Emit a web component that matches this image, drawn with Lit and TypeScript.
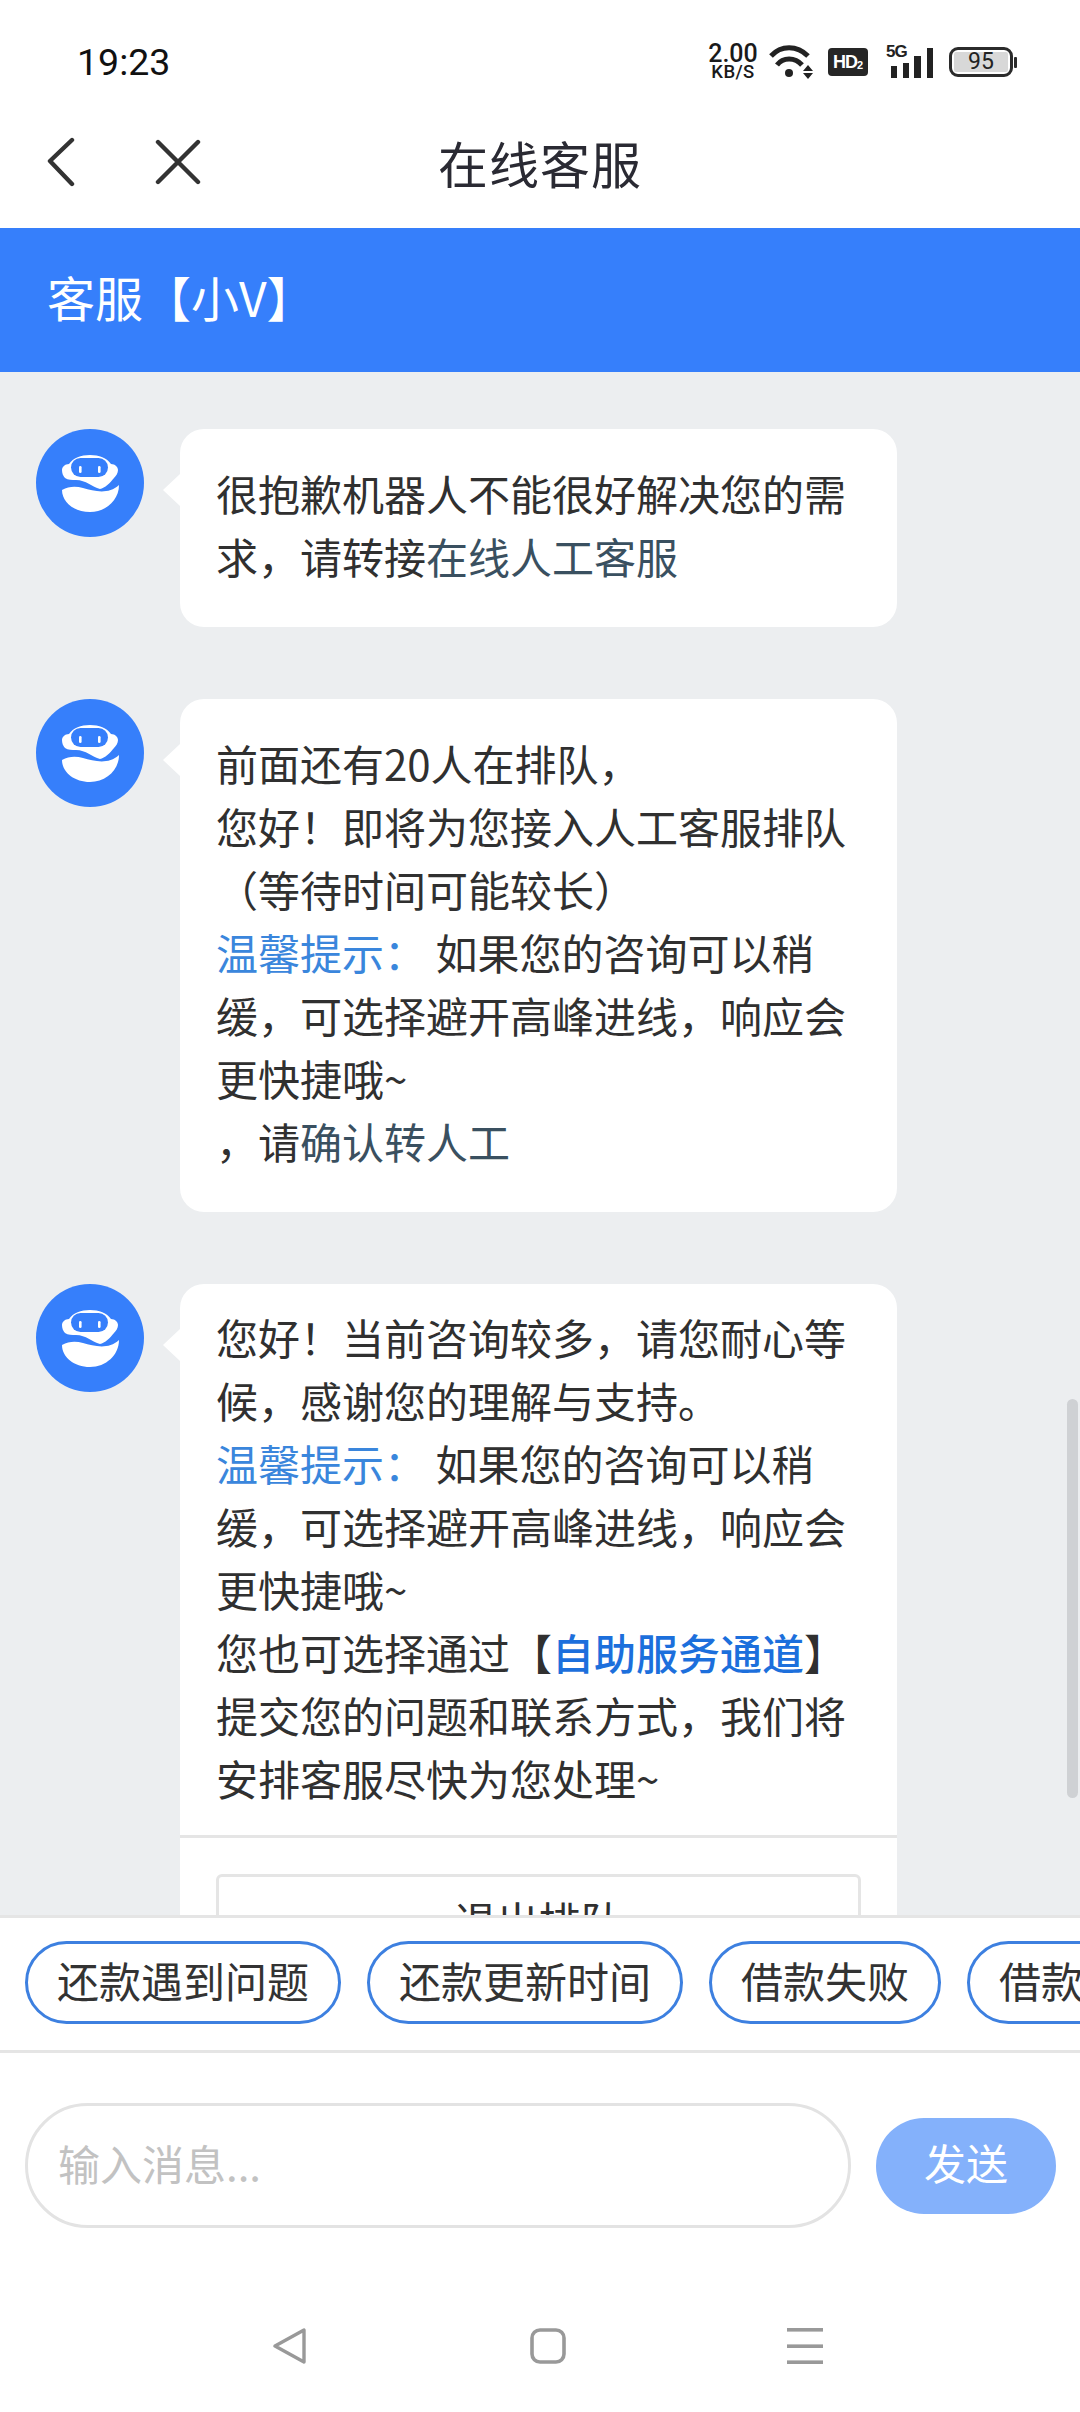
import { LitElement, html, css, unsafeCSS } from "lit";
import { customElement } from "lit/decorators.js";

const CJK = unsafeCSS(`"Noto Sans CJK SC", "Noto Sans", sans-serif`);

@customElement("app-root")
export class AppRoot extends LitElement {
  static styles = css`
    :host { display: block; width: 1080px; height: 2412px; font-family: ${CJK}; background: #fff; overflow: hidden; color: #303030; }
    .page { display: flex; flex-direction: column; height: 2412px; }
    .status { height: 68px; padding: 28px 67px 0 77px; display: flex; align-items: center; justify-content: space-between; flex: none; }
    .time { font: 400 37.5px Roboto, sans-serif; color: #111; }
    .sicons { display: flex; align-items: center; }
    .speed { width: 50px; margin-right: 11px; display: flex; flex-direction: column; align-items: center; font-family: Roboto, sans-serif; font-weight: 500; color: #1a1a1a; line-height: 1; }
    .speed b { font-size: 25px; font-weight: 500; line-height: 20px; }
    .speed i { font-style: normal; font-size: 18.5px; line-height: 16px; letter-spacing: 0.4px; }
    .hd { width: 40px; height: 28px; margin: 0 19px 0 15px; background: #262626; border-radius: 4px; color: #fff; font: 700 18px "Liberation Sans", sans-serif; display: flex; align-items: center; justify-content: center; letter-spacing: -1px; }
    .hd sub { font-size: 11px; line-height: 1; vertical-align: baseline; margin-top: 6px; letter-spacing: 0; }
    .net { position: relative; width: 46px; height: 32px; margin-right: 16px; }
    .net span { position: absolute; left: -1px; top: -4px; font: 700 17px/20px "Liberation Sans", sans-serif; color: #222; letter-spacing: -1px; }
    .batt { width: 64px; height: 30px; box-sizing: border-box; border: 3px solid #2b2b2b; border-radius: 9px; padding: 2px; position: relative; display: flex; }
    .batt::after { content: ""; position: absolute; right: -7px; top: 7px; width: 3px; height: 11px; background: #2b2b2b; border-radius: 1px; }
    .batt span { flex: 1; background: #d8d8d8; border-radius: 2px; font: 400 23px/20px Roboto, sans-serif; text-align: center; color: #222; }
    .nav { height: 132px; flex: none; display: grid; grid-template-columns: 1fr auto 1fr; align-items: center; }
    .nav-left { display: flex; align-items: center; padding-left: 46px; gap: 79px; }
    .nav-left svg { display: block; }
    .title { font-size: 50px; line-height: 60px; color: #2a2a33; letter-spacing: 1px; }
    .head { height: 144px; flex: none; box-sizing: border-box; background: #367ffb; color: #fff; font-size: 48px; line-height: 136px; padding-left: 47px; }
    .chat { flex: 1; min-height: 0; overflow: hidden; background: #eceef0; padding: 57px 0 0 36px; position: relative; }
    .thumb { position: absolute; right: 2px; top: 1027px; width: 11px; height: 399px; border-radius: 6px; background: #cfd1d4; }
    .row { display: flex; align-items: flex-start; gap: 36px; margin-bottom: 72px; }
    .avatar { width: 108px; height: 108px; flex: none; display: block; }
    .bubble { width: 717px; box-sizing: border-box; background: #fff; border-radius: 24px; position: relative; font-size: 42px; line-height: 63px; color: #303030; flex: none; }
    .bubble::before { content: ""; position: absolute; left: -17px; top: 45px; border-style: solid; border-width: 16px 17px 16px 0; border-color: transparent #fff transparent transparent; }
    .body { padding: 32px 36px 40px; }
    .body.tight { padding: 21px 36px 26px; }
    .link { color: #3a5060; }
    .tip { color: #3a86dc; }
    .self { color: #1c6fdc; font-weight: 500; }
    .foot { border-top: 3px solid #e5e5e5; padding: 36px; }
    .btn { border: 3px solid #e5e5e5; border-radius: 6px; text-align: center; padding: 11px 0; }
    .chips { flex: none; height: 132px; border-top: 3px solid #e5e5e5; border-bottom: 3px solid #e5e5e5; background: #fff; display: flex; align-items: flex-start; gap: 26px; padding-left: 25px; overflow: hidden; position: relative; }
    .chip { flex: none; margin-top: 23px; height: 83px; box-sizing: border-box; border: 3px solid #3d80e0; border-radius: 42px; padding: 0 29px; font-size: 42px; line-height: 71px; color: #333; white-space: nowrap; }
    .input { flex: none; display: flex; align-items: center; padding: 50px 24px 0 25px; gap: 25px; }
    .field { width: 826px; height: 125px; box-sizing: border-box; border: 3px solid #e3e3e3; border-radius: 63px; padding-left: 30px; font-size: 42px; line-height: 113px; color: #c2c2c2; flex: none; }
    .send { width: 180px; height: 96px; border-radius: 48px; background: #84b1fb; color: #fff; font-size: 42px; line-height: 88px; text-align: center; flex: none; }
    .sys { flex: none; height: 184px; display: flex; align-items: flex-start; justify-content: center; box-sizing: border-box; padding: 100px 0 0 15px; }
    .sys-in { width: 551px; display: flex; justify-content: space-between; align-items: flex-start; }
    .sys svg { display: block; }
  `;

  private avatar() {
    return html`<svg class="avatar" viewBox="0 0 108 108">
      <circle cx="54" cy="54" r="54" fill="#367ffb"></circle>
      <path fill="#fff" d="M54 26C63 26 71 29 75 35C79 35 82 38 82 41C82 44 80 47 78 49C74 54 69 59 64 60C56 58 50 51 40 51C36 51 32 51 29 49C27 47 26 44 26 41C26 38 29 35 33 35C37 29 45 26 54 26Z"></path>
      <rect x="35" y="29" width="37" height="19" rx="9.5" fill="#367ffb"></rect>
      <rect x="43" y="37" width="2.6" height="7" rx="1.3" fill="#fff"></rect>
      <rect x="62" y="37" width="2.6" height="7" rx="1.3" fill="#fff"></rect>
      <path fill="#fff" d="M26 61C33 57 40 57 47 59C58 62 72 66 83 56C83 71 70 83 54 83C38 83 26 73 26 61Z"></path>
    </svg>`;
  }

  render() {
    return html`<div class="page">
      <div class="status">
        <span class="time">19:23</span>
        <div class="sicons">
          <div class="speed"><b>2.00</b><i>KB/S</i></div>
          <svg width="44" height="34" viewBox="0 0 44 34" fill="none" stroke="#222" stroke-width="5">
            <path d="M2 11C12 0 28 0 39 11"></path>
            <path d="M8 20C14 12 26 12 33 20"></path>
            <circle cx="20" cy="28" r="4" fill="#222" stroke="none"></circle>
            <path d="M39 20L44 26H34Z M39 34L44 28H34Z" fill="#222" stroke="none"></path>
          </svg>
          <div class="hd">HD<sub>2</sub></div>
          <div class="net">
            <span>5G</span>
            <svg width="46" height="32" viewBox="0 0 46 32" fill="#222">
              <rect x="4" y="20" width="6" height="12"></rect>
              <rect x="16" y="17" width="6" height="15"></rect>
              <rect x="27" y="10" width="7" height="22"></rect>
              <rect x="40" y="2" width="6" height="30"></rect>
            </svg>
          </div>
          <div class="batt"><span>95</span></div>
        </div>
      </div>
      <div class="nav">
        <div class="nav-left">
          <svg width="30" height="50" viewBox="0 0 30 50" fill="none" stroke="#333" stroke-width="4.4" stroke-linecap="round" stroke-linejoin="round"><path d="M26 3L4 24L26 47"></path></svg>
          <svg width="46" height="46" viewBox="0 0 46 46" fill="none" stroke="#333" stroke-width="4.4" stroke-linecap="round"><path d="M3 3L43 43M43 3L3 43"></path></svg>
        </div>
        <div class="title">在线客服</div>
        <div></div>
      </div>
      <div class="head">客服【小V】</div>
      <div class="chat">
        <div class="row">
          ${this.avatar()}
          <div class="bubble"><div class="body">很抱歉机器人不能很好解决您的需求，请转接<span class="link">在线人工客服</span></div></div>
        </div>
        <div class="row">
          ${this.avatar()}
          <div class="bubble"><div class="body">前面还有20人在排队，<br>您好！即将为您接入人工客服排队（等待时间可能较长）<br><span class="tip">温馨提示：</span> 如果您的咨询可以稍缓，可选择避开高峰进线，响应会更快捷哦~<br>，请<span class="link">确认转人工</span></div></div>
        </div>
        <div class="row">
          ${this.avatar()}
          <div class="bubble">
            <div class="body tight">您好！当前咨询较多，请您耐心等候，感谢您的理解与支持。<br><span class="tip">温馨提示：</span> 如果您的咨询可以稍缓，可选择避开高峰进线，响应会更快捷哦~<br>您也可选择通过【<span class="self">自助服务通道</span>】提交您的问题和联系方式，我们将安排客服尽快为您处理~</div>
            <div class="foot"><div class="btn">退出排队</div></div>
          </div>
        </div>
        <div class="thumb"></div>
      </div>
      <div class="chips">
        <div class="chip">还款遇到问题</div>
        <div class="chip">还款更新时间</div>
        <div class="chip">借款失败</div>
        <div class="chip">借款进度</div>
      </div>
      <div class="input">
        <div class="field">输入消息...</div>
        <div class="send">发送</div>
      </div>
      <div class="sys">
        <div class="sys-in">
          <svg width="36" height="36" viewBox="0 0 36 36" fill="none" stroke="#999" stroke-width="3.4" stroke-linejoin="round"><path d="M3 18L32 2V34Z"></path></svg>
          <svg width="36" height="36" viewBox="0 0 36 36" fill="none" stroke="#999" stroke-width="3.6"><rect x="2" y="2" width="32" height="32" rx="8"></rect></svg>
          <svg width="36" height="36" viewBox="0 0 36 36" fill="#999"><rect y="0" width="36" height="3.6"></rect><rect y="16.4" width="36" height="3.6"></rect><rect y="32.4" width="36" height="3.6"></rect></svg>
        </div>
      </div>
    </div>`;
  }
}
